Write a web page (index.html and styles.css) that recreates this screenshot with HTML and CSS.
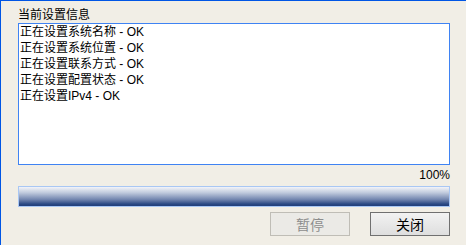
FILE: index.html
```html
<!DOCTYPE html>
<html lang="zh-CN">
<head>
  <meta charset="UTF-8">
  <title>当前设置信息</title>
  <link rel="stylesheet" href="styles.css">
</head>
<body>
  <div class="dlg">
    <div class="caption">当前设置信息</div>
    <div class="log">
      <div>正在设置系统名称 - OK</div>
      <div>正在设置系统位置 - OK</div>
      <div>正在设置联系方式 - OK</div>
      <div>正在设置配置状态 - OK</div>
      <div>正在设置IPv4 - OK</div>
    </div>
    <div class="pct">100%</div>
    <div class="bar"><div class="fill" style="width:100%"></div></div>
    <div class="btns">
      <button class="btn" disabled>暂停</button>
      <button class="btn">关闭</button>
    </div>
  </div>
</body>
</html>
```

FILE: styles.css
```css
html, body {
  margin: 0;
  height: 100%;
}

body {
  font-family: "Liberation Sans", "Noto Sans CJK SC", sans-serif;
  font-size: 12px;
  background-color: #f1eee6;
  border-top: 1px solid #0055e5;
  border-left: 1px solid #0055e5;
  box-sizing: border-box;
  color: #000;
}

.dlg {
  display: flex;
  flex-direction: column;
  padding: 6px 16px 0 17px;
}

.caption {
  line-height: 16px;
}

.log {
  height: 140px;
  background: #fff;
  border: 1px solid #3f83f3;
  padding-left: 1px;
  line-height: 16px;
}

.pct {
  margin-top: 2px;
  line-height: 16px;
  text-align: right;
}

.bar {
  margin-top: 3px;
  height: 19px;
  border: 1px solid #a9c7f4;
  background: #fff;
}

.fill {
  height: 100%;
  background: linear-gradient(#f3f4f9, #c0cadd 30%, #7487b0 65%, #2a4883 90%, #203e7a);
}

.btns {
  display: flex;
  justify-content: flex-end;
  gap: 20px;
  margin-top: 5px;
}

.btn {
  width: 80px;
  height: 24px;
  font-family: "Liberation Sans", "Noto Sans CJK SC", sans-serif;
  font-size: 14px;
  border: 1px solid #707070;
  background: linear-gradient(#f2f2f2, #dedede);
  color: #000;
  padding: 0;
}

.btn:disabled {
  border-color: #bfbdb6;
  background: #ebeae6;
  color: #8d8d8d;
}
```
